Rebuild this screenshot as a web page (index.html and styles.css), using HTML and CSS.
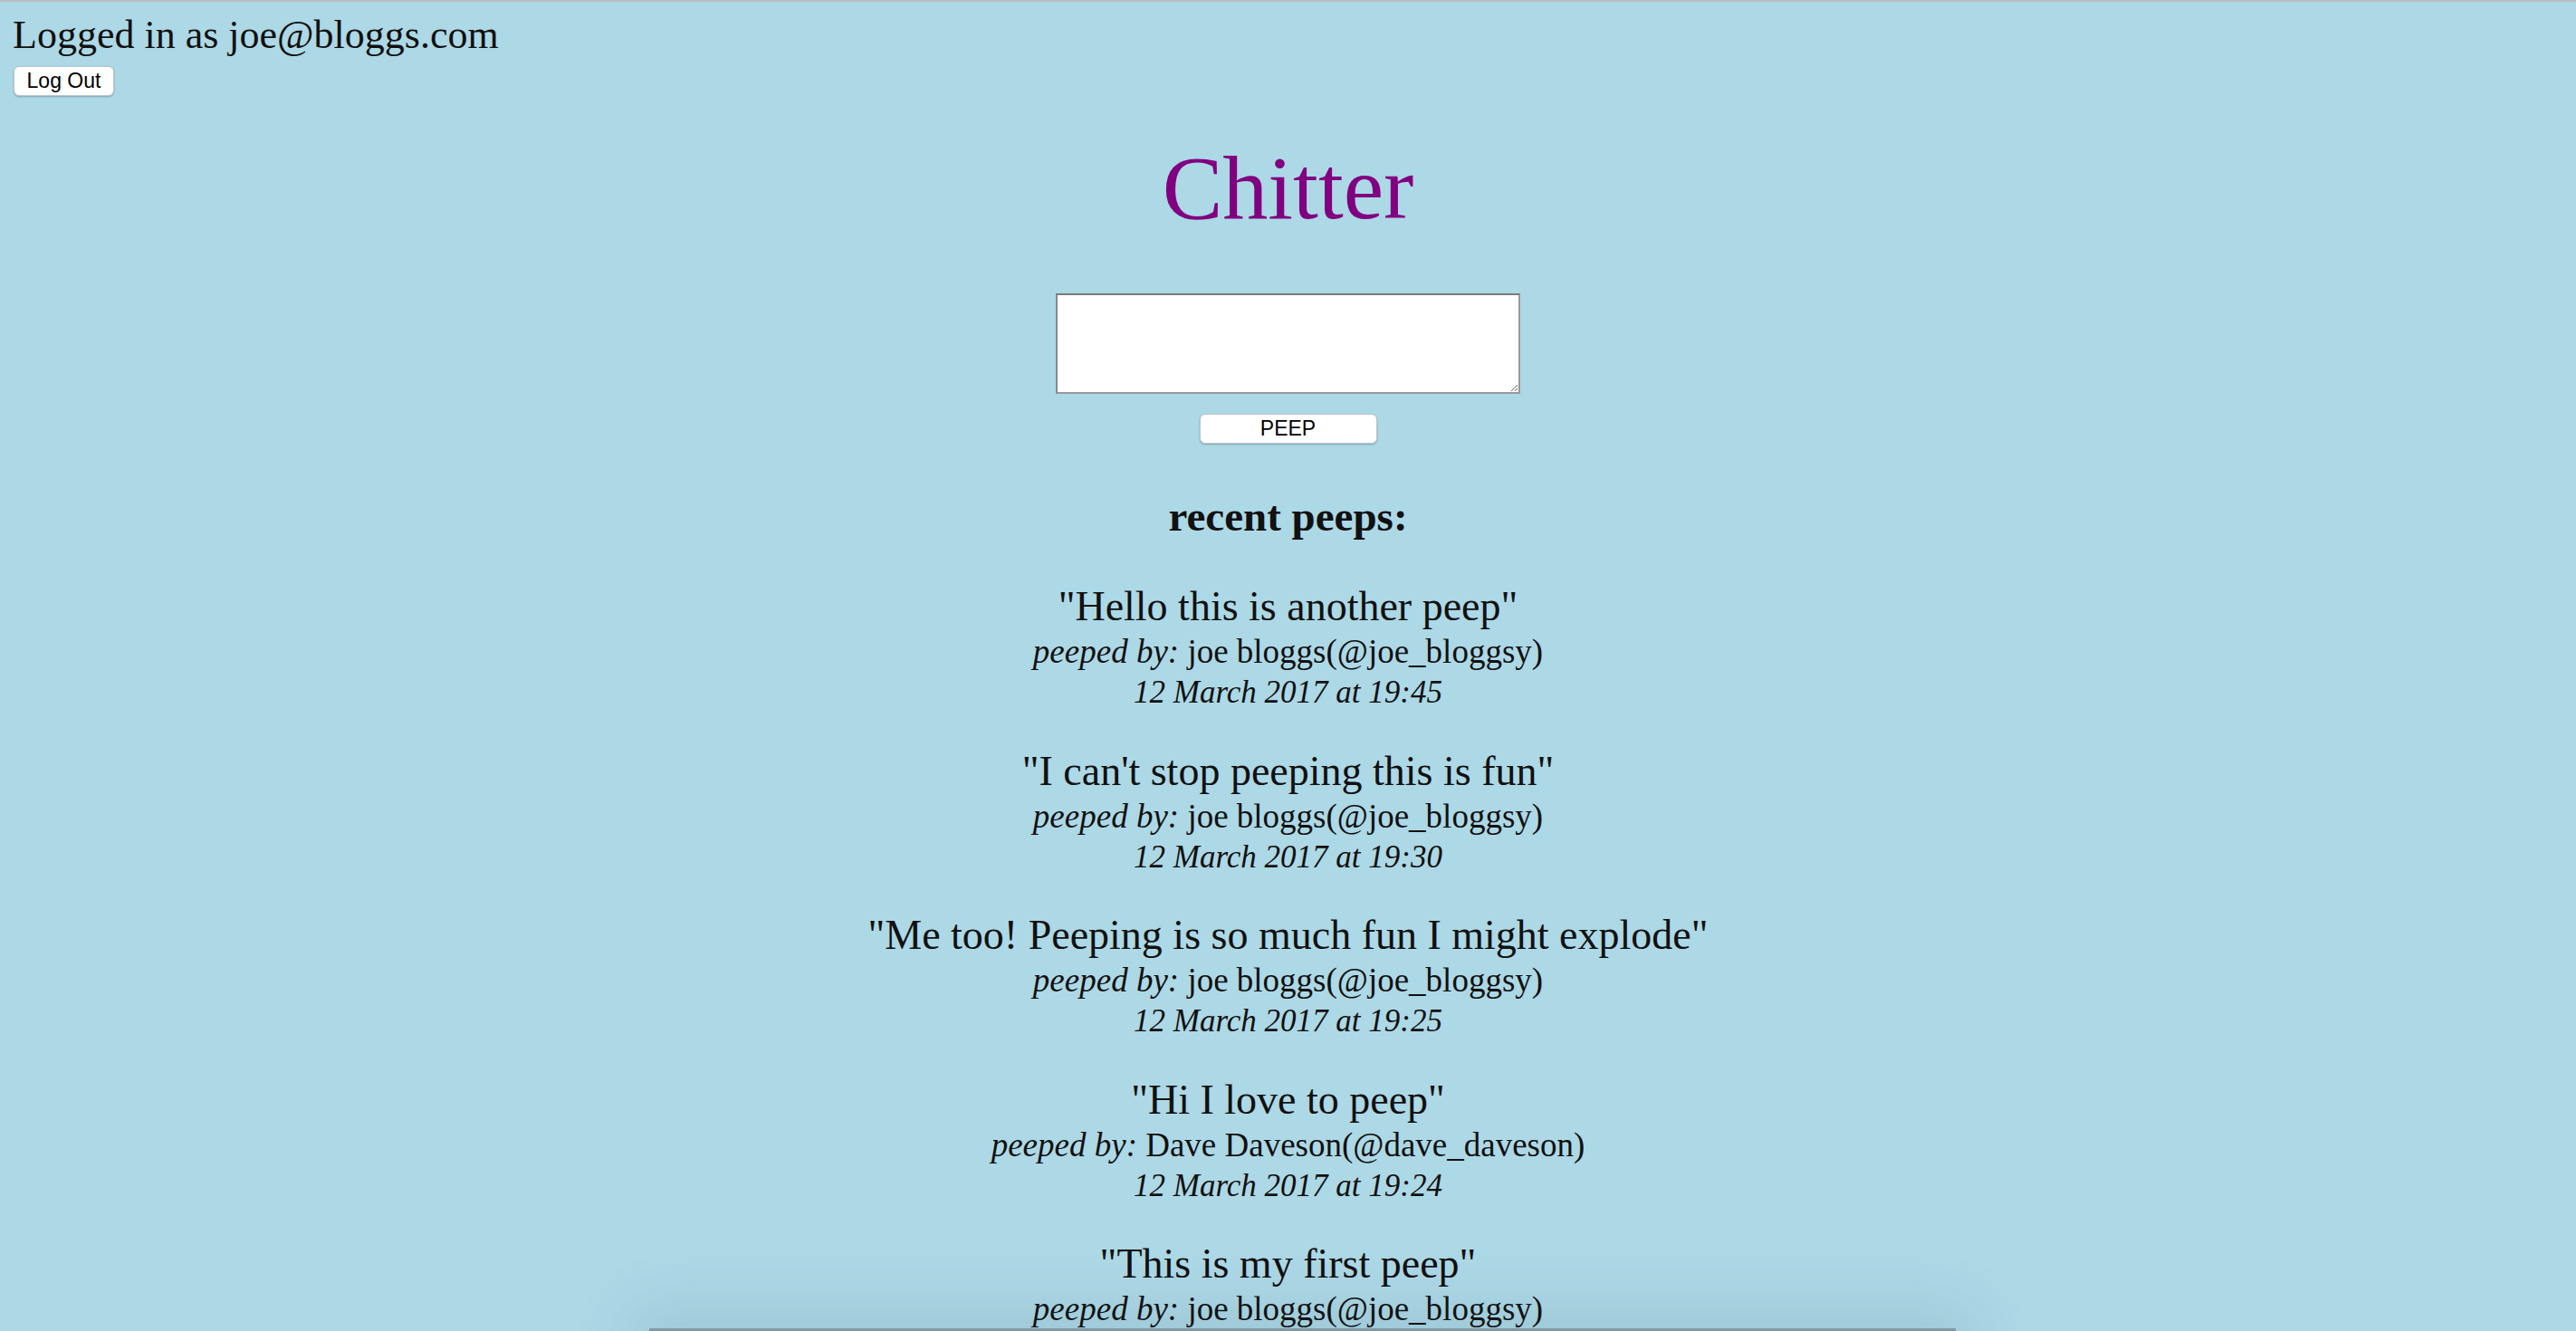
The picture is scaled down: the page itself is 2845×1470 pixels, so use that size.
FILE: index.html
```html
<!DOCTYPE html>
<html lang="en">
<head>
<meta charset="utf-8">
<title>Chitter</title>
<link rel="stylesheet" href="styles.css">
</head>
<body>
<header class="session">
  <p class="session-text">Logged in as joe@bloggs.com</p>
  <form class="logout-form">
    <button type="button" class="btn btn-logout">Log Out</button>
  </form>
</header>
<main class="main">
  <h1 class="title">Chitter</h1>
  <form class="peep-form">
    <textarea class="peep-input"></textarea>
    <button type="button" class="btn btn-peep">PEEP</button>
  </form>
  <h2 class="recent">recent peeps:</h2>
  <section class="peeps">
    <article class="peep">
      <p class="peep-text">"Hello this is another peep"</p>
      <p class="peep-by"><em>peeped by:</em> joe bloggs(@joe_bloggsy)</p>
      <p class="peep-date">12 March 2017 at 19:45</p>
    </article>
    <article class="peep">
      <p class="peep-text">"I can't stop peeping this is fun"</p>
      <p class="peep-by"><em>peeped by:</em> joe bloggs(@joe_bloggsy)</p>
      <p class="peep-date">12 March 2017 at 19:30</p>
    </article>
    <article class="peep">
      <p class="peep-text">"Me too! Peeping is so much fun I might explode"</p>
      <p class="peep-by"><em>peeped by:</em> joe bloggs(@joe_bloggsy)</p>
      <p class="peep-date">12 March 2017 at 19:25</p>
    </article>
    <article class="peep">
      <p class="peep-text">"Hi I love to peep"</p>
      <p class="peep-by"><em>peeped by:</em> Dave Daveson(@dave_daveson)</p>
      <p class="peep-date">12 March 2017 at 19:24</p>
    </article>
    <article class="peep">
      <p class="peep-text">"This is my first peep"</p>
      <p class="peep-by"><em>peeped by:</em> joe bloggs(@joe_bloggsy)</p>
      <p class="peep-date">12 March 2017 at 19:20</p>
    </article>
  </section>
</main>
<div class="bottom-sheet"></div>
</body>
</html>
```
FILE: styles.css
```css
html {
  scrollbar-width: none;
}
html::-webkit-scrollbar {
  display: none;
}
body {
  margin: 0;
  background: #add8e6;
  border-top: 2px solid #bcbcbc;
  font-family: "Liberation Serif", "Times New Roman", serif;
  color: #111;
}
.session {
  padding: 12px 0 0 14px;
}
.session-text {
  margin: 0;
  font-size: 44px;
  line-height: 50px;
}
.logout-form {
  margin: 9px 0 0 1px;
}
.btn {
  font-family: "Liberation Sans", Arial, sans-serif;
  font-size: 23px;
  color: #000;
  background: #fff;
  border: 1px solid #b9c6cb;
  border-radius: 6px;
  box-shadow: 0 1px 2px rgba(0, 0, 0, 0.25);
  height: 33px;
  padding: 0;
  display: flex;
  align-items: center;
  justify-content: center;
}
.btn-logout {
  width: 111px;
}
.main {
  display: flex;
  flex-direction: column;
  align-items: center;
  text-align: center;
}
.title {
  margin: 47px 0 0;
  font-size: 100px;
  line-height: 110px;
  font-weight: normal;
  color: #800080;
}
.peep-form {
  margin-top: 61px;
  display: flex;
  flex-direction: column;
  align-items: center;
}
.peep-input {
  box-sizing: border-box;
  width: 513px;
  height: 111px;
  margin: 0;
  background: #fff;
  border: 2px solid #999;
  border-top-color: #7a7a7a;
  border-left-color: #888;
}
.btn-peep {
  width: 196px;
  margin-top: 22px;
}
.recent {
  margin: 52px 0 0;
  font-size: 47px;
  line-height: 56px;
  font-weight: bold;
}
.peeps {
  margin-top: 44px;
  display: flex;
  flex-direction: column;
  align-items: center;
  gap: 36.5px;
}
.peep p {
  margin: 0;
  white-space: nowrap;
}
.peep-text {
  font-size: 46px;
  line-height: 55px;
}
.peep-by {
  font-size: 37px;
  line-height: 45px;
}
.peep-by em {
  font-style: italic;
}
.peep-date {
  font-size: 35px;
  line-height: 45px;
  font-style: italic;
}
.bottom-sheet {
  position: fixed;
  left: 717px;
  width: 1443px;
  top: 1467px;
  height: 60px;
  background: #7f9ba6;
  box-shadow: 0 0 70px 20px rgba(40, 70, 90, 0.12);
}
```
